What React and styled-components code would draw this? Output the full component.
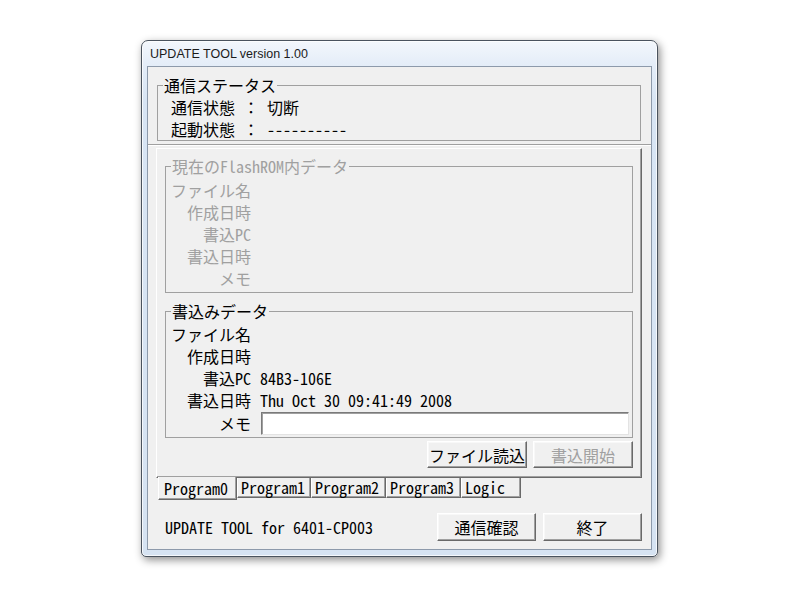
import React from 'react';
import styled, { createGlobalStyle } from 'styled-components';

const UI_FONT = `"Noto Sans Mono CJK JP", "Noto Sans CJK JP", "Liberation Mono", monospace`;

const GlobalStyle = createGlobalStyle`
  html, body {
    margin: 0;
    padding: 0;
    background: #ffffff;
  }
  body {
    font-family: ${UI_FONT};
  }
`;

const TABS = [
  { name: 'Program0', w: 79 },
  { name: 'Program1', w: 74 },
  { name: 'Program2', w: 75 },
  { name: 'Program3', w: 75 },
  { name: 'Logic', w: 60 },
];

const FIELDS = [
  { label: 'ファイル名', value: '' },
  { label: '作成日時', value: '' },
  { label: '書込PC', value: '84B3-106E' },
  { label: '書込日時', value: 'Thu Oct 30 09:41:49 2008' },
];

export default function App() {
  return (
    <>
      <GlobalStyle />
      <Desktop>
        <Window>
          <TitleBar>UPDATE TOOL version 1.00</TitleBar>
          <Client>
            <StatusPanel>
              <GroupBox $w={484}>
                <GroupTitle>通信ステータス</GroupTitle>
                <StatusRows>
                  <StatusLine>{'通信状態 ： 切断'}</StatusLine>
                  <StatusLine>{'起動状態 ： ----------'}</StatusLine>
                </StatusRows>
              </GroupBox>
            </StatusPanel>

            <TabControl>
              <TabPage>
                <GroupBox $w={468} $disabled>
                  <GroupTitle>現在のFlashROM内データ</GroupTitle>
                  <FieldGrid $top={4} $bottom={3}>
                    {FIELDS.map((f) => (
                      <React.Fragment key={f.label}>
                        <FieldLabel>{f.label}</FieldLabel>
                        <FieldValue />
                      </React.Fragment>
                    ))}
                    <FieldLabel>メモ</FieldLabel>
                    <FieldValue />
                  </FieldGrid>
                </GroupBox>

                <GroupBox $w={468} $mt={9}>
                  <GroupTitle>書込みデータ</GroupTitle>
                  <FieldGrid $top={3} $bottom={2}>
                    {FIELDS.map((f) => (
                      <React.Fragment key={f.label}>
                        <FieldLabel>{f.label}</FieldLabel>
                        <FieldValue>{f.value}</FieldValue>
                      </React.Fragment>
                    ))}
                    <FieldLabel $h={24}>メモ</FieldLabel>
                    <MemoRow>
                      <MemoInput type="text" defaultValue="" />
                    </MemoRow>
                  </FieldGrid>
                </GroupBox>

                <ButtonRow>
                  <Button>ファイル読込</Button>
                  <Button disabled>書込開始</Button>
                </ButtonRow>
              </TabPage>

              <TabStrip>
                {TABS.map((t, i) => (
                  <Tab key={t.name} $w={t.w} $active={i === 0}>
                    {t.name}
                  </Tab>
                ))}
              </TabStrip>
            </TabControl>

            <BottomBar>
              <InfoText>UPDATE TOOL for 6401-CP003</InfoText>
              <BottomButtons>
                <Button $w={99} $h={28}>通信確認</Button>
                <Button $w={99} $h={28}>終了</Button>
              </BottomButtons>
            </BottomBar>
          </Client>
        </Window>
      </Desktop>
    </>
  );
}

const Desktop = styled.div`
  width: 800px;
  height: 600px;
  box-sizing: border-box;
  padding: 40px 0 0 141px;
  background: #ffffff;
`;

const Window = styled.div`
  width: 517px;
  height: 517px;
  box-sizing: border-box;
  display: flex;
  flex-direction: column;
  padding: 0 5px 6px 5px;
  border: 1px solid #4a535e;
  border-radius: 7px 7px 5px 5px;
  background: linear-gradient(
    to bottom,
    #f3f7fc 0px,
    #e4edf8 24px,
    #d8e5f4 60px,
    #d6e3f2 100%
  );
  box-shadow: 2px 3px 9px rgba(0, 0, 0, 0.45), inset 0 0 0 1px rgba(255, 255, 255, 0.75);
`;

const TitleBar = styled.div`
  height: 25px;
  display: flex;
  align-items: center;
  padding-left: 3px;
  font-family: "Liberation Sans", "Noto Sans", Arial, sans-serif;
  font-size: 12.5px;
  color: #1b1b1b;
`;

const Client = styled.div`
  flex: 1;
  box-sizing: border-box;
  display: flex;
  flex-direction: column;
  border: 1px solid #8d9aab;
  background: #f0f0f0;
  font-family: ${UI_FONT};
  font-size: 16px;
  color: #000000;
`;

const StatusPanel = styled.div`
  height: 78px;
  box-sizing: border-box;
  padding: 9px 0 0 9px;
  border-bottom: 1px solid #a0a0a0;
  box-shadow: 0 1px 0 #ffffff;
`;

const GroupBox = styled.fieldset`
  width: ${(p) => p.$w}px;
  box-sizing: border-box;
  margin: ${(p) => p.$mt || 0}px 0 0 0;
  padding: 0;
  border: 1px solid #a0a0a0;
  color: ${(p) => (p.$disabled ? '#a0a0a0' : '#000000')};
`;

const GroupTitle = styled.legend`
  margin-left: 5px;
  padding: 0 1px;
  line-height: 18px;
  height: 18px;
  font-size: 16px;
`;

const StatusRows = styled.div`
  padding: 2px 0 0 13px;
`;

const StatusLine = styled.div`
  height: 22px;
  line-height: 22px;
  white-space: pre;
`;

const TabControl = styled.div`
  margin: 3px 0 0 8px;
  width: 486px;
  display: flex;
  flex-direction: column;
`;

const TabPage = styled.div`
  position: relative;
  z-index: 1;
  height: 330px;
  box-sizing: border-box;
  padding: 8px 8px 0 8px;
  border: 1px solid;
  border-color: #ffffff #696969 #696969 #ffffff;
  box-shadow: inset -1px -1px 0 #a0a0a0;
  display: flex;
  flex-direction: column;
`;

const FieldGrid = styled.div`
  display: grid;
  grid-template-columns: 85px 1fr;
  column-gap: 9px;
  padding: ${(p) => p.$top}px 0 ${(p) => p.$bottom}px 0;
`;

const FieldLabel = styled.div`
  text-align: right;
  height: ${(p) => p.$h || 22}px;
  line-height: ${(p) => p.$h || 22}px;
  white-space: nowrap;
`;

const FieldValue = styled.div`
  height: 22px;
  line-height: 22px;
  white-space: pre;
`;

const MemoRow = styled.div`
  height: 24px;
  display: flex;
  align-items: center;
  padding-left: 1px;
  padding-right: 3px;
`;

const MemoInput = styled.input`
  width: 100%;
  height: 23px;
  box-sizing: border-box;
  margin: 0;
  padding: 0 3px;
  background: #ffffff;
  border: 1px solid;
  border-color: #7a7a7a #e3e3e3 #e3e3e3 #7a7a7a;
  box-shadow: inset 1px 1px 0 #a0a0a0;
  font-family: ${UI_FONT};
  font-size: 16px;
  outline: none;
`;

const ButtonRow = styled.div`
  display: flex;
  justify-content: flex-end;
  gap: 6px;
  margin-top: 3px;
`;

const Button = styled.button`
  width: ${(p) => p.$w || 100}px;
  height: ${(p) => p.$h || 27}px;
  box-sizing: border-box;
  margin: 0;
  padding: 0;
  background: #f0f0f0;
  border: 1px solid;
  border-color: #ffffff #696969 #696969 #ffffff;
  box-shadow: inset -1px -1px 0 #a0a0a0, inset 1px 1px 0 #f8f8f8;
  font-family: ${UI_FONT};
  font-size: 16px;
  color: #000000;
  white-space: nowrap;
  &:disabled {
    color: #a0a0a0;
  }
`;

const TabStrip = styled.div`
  display: flex;
  align-items: flex-start;
  margin: -1px 0 0 2px;
`;

const Tab = styled.div`
  position: relative;
  z-index: ${(p) => (p.$active ? 2 : 0)};
  width: ${(p) => p.$w}px;
  height: ${(p) => (p.$active ? 23 : 20)}px;
  box-sizing: border-box;
  margin-top: ${(p) => (p.$active ? 0 : 1)}px;
  padding: ${(p) => (p.$active ? '2px 0 0 5px' : '0 0 0 3px')};
  background: #f0f0f0;
  border: 1px solid;
  border-top: none;
  border-color: #ffffff #696969 #696969 #ffffff;
  box-shadow: inset -1px -1px 0 #a0a0a0;
  line-height: 19px;
  white-space: nowrap;
`;

const BottomBar = styled.div`
  display: flex;
  align-items: center;
  justify-content: space-between;
  margin-top: 13px;
  padding: 0 9px 0 17px;
  height: 28px;
`;

const InfoText = styled.div`
  white-space: pre;
`;

const BottomButtons = styled.div`
  display: flex;
  gap: 7px;
`;
